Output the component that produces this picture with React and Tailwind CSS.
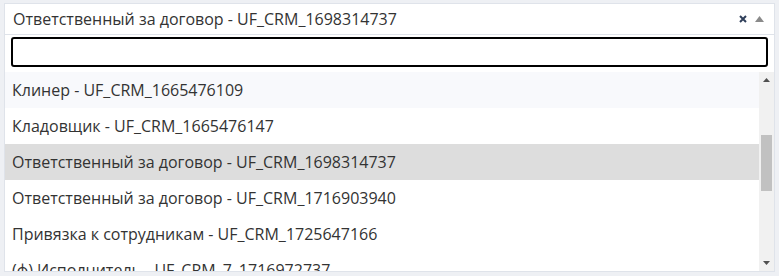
import React from 'react';

const items = [
  { label: 'Клинер - UF_CRM_1665476109', state: 'hover' },
  { label: 'Кладовщик - UF_CRM_1665476147' },
  { label: 'Ответственный за договор - UF_CRM_1698314737', state: 'selected' },
  { label: 'Ответственный за договор - UF_CRM_1716903940' },
  { label: 'Привязка к сотрудникам - UF_CRM_1725647166' },
  { label: '(ф) Исполнитель - UF_CRM_7_1716972737' },
];

const App = () => {
  return (
    <div
      className="w-[779px] h-[276px] overflow-hidden bg-[#eef0f4] pt-[3px] px-[4px] text-[#333333]"
      style={{ fontFamily: '"Open Sans", "Noto Sans", sans-serif' }}
    >
      {/* selected value */}
      <div className="h-[32px] bg-white border border-[#dfe3ea] flex items-center pl-[8px] pr-[8px]">
        <span className="flex-1 text-[16px] truncate">Ответственный за договор - UF_CRM_1698314737</span>
        <svg width="8" height="8" viewBox="0 0 8 8" className="mr-[8px]">
          <path d="M1 1 L7 7 M7 1 L1 7" stroke="#2f3f5a" strokeWidth="2" />
        </svg>
        <svg width="9" height="6" viewBox="0 0 9 6" className="mr-[2px]">
          <path d="M0 6 L4.5 0 L9 6 Z" fill="#8a8a8a" />
        </svg>
      </div>

      {/* dropdown */}
      <div className="bg-white border border-t-0 border-[#dfe3ea]">
        <div className="px-[6px] pt-[2px] pb-[5px] bg-white">
          <input className="w-full h-[30px] border-2 border-black rounded-[3px] outline-none px-2 text-[16px]" />
        </div>
        <div className="flex h-[199px] overflow-hidden">
          <ul className="flex-1">
            {items.map((it) => (
              <li
                key={it.label}
                className={
                  'h-[36px] flex items-center pl-[7px] text-[16px] whitespace-nowrap ' +
                  (it.state === 'selected'
                    ? 'bg-[#dddddd]'
                    : it.state === 'hover'
                    ? 'bg-[#f8f9fc]'
                    : 'bg-white')
                }
              >
                {it.label}
              </li>
            ))}
          </ul>
          <div className="w-[15px] bg-[#f1f1f1] flex flex-col items-center">
            <svg width="7" height="4" viewBox="0 0 7 4" className="mt-[6px]">
              <path d="M0 4 L3.5 0 L7 4 Z" fill="#505050" />
            </svg>
            <div className="w-[11px] h-[56px] bg-[#c1c1c1] mt-[53px]" />
            <div className="flex-1" />
            <svg width="7" height="4" viewBox="0 0 7 4" className="mb-[6px]">
              <path d="M0 0 L3.5 4 L7 0 Z" fill="#505050" />
            </svg>
          </div>
        </div>
      </div>
    </div>
  );
};

export default App;
